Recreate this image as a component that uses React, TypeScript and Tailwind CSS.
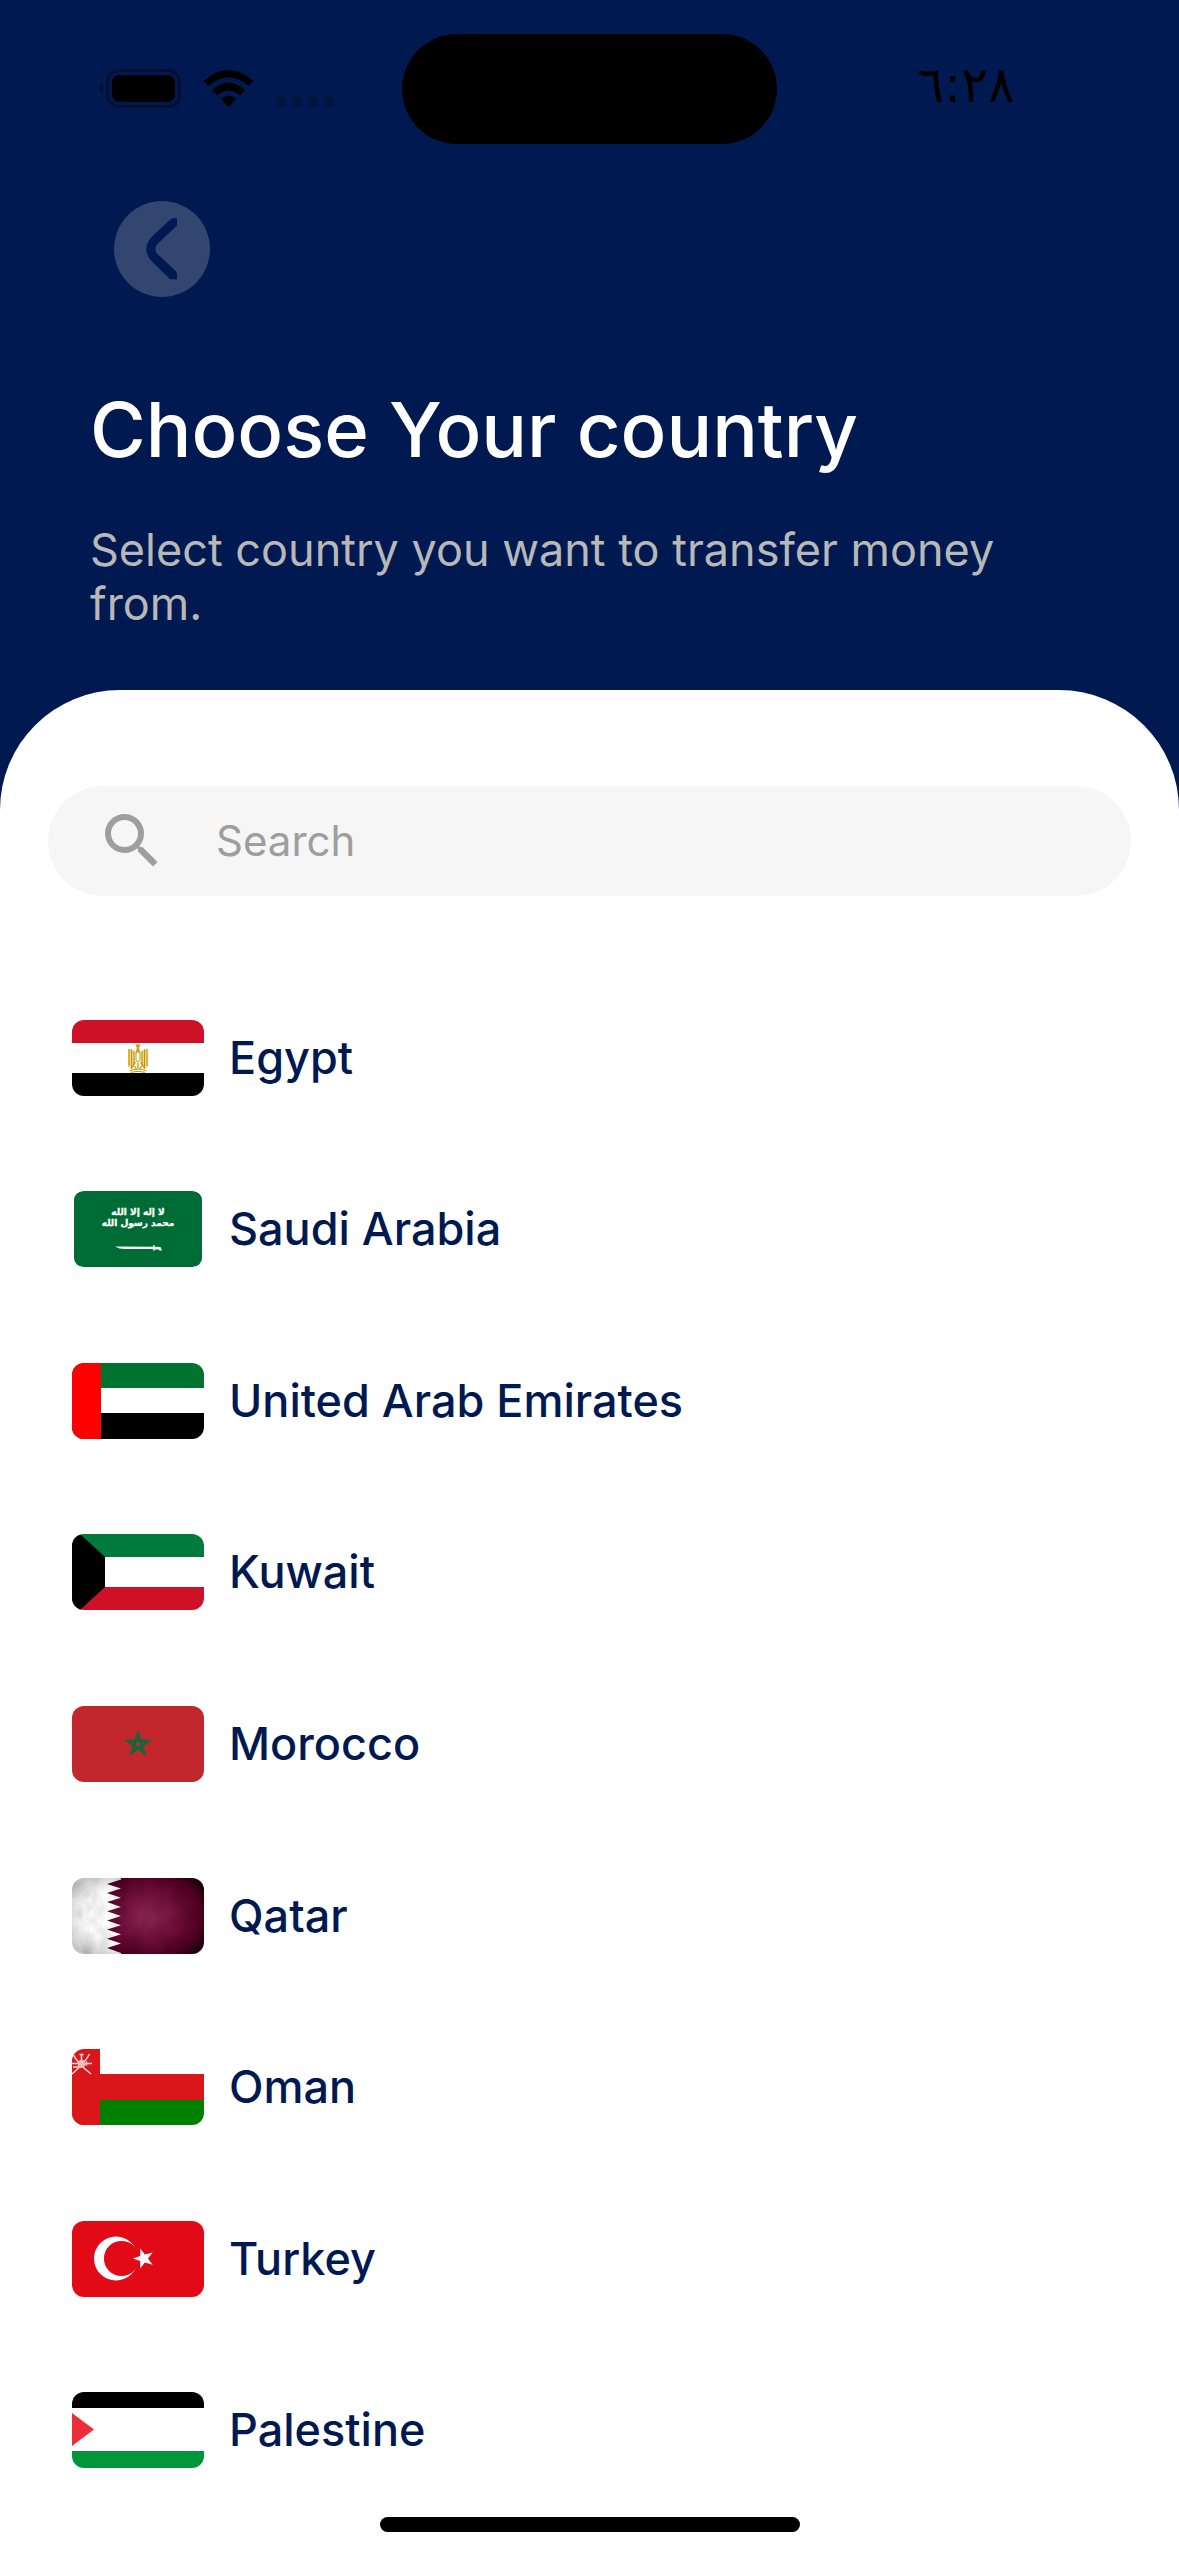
import { useState, type ReactNode } from 'react';
import { MdSearch } from 'react-icons/md';

type Country = {
  name: string;
  flag: ReactNode;
};

const countries: Country[] = [
  { name: 'Egypt', flag: <EgyptFlag /> },
  { name: 'Saudi Arabia', flag: <SaudiFlag /> },
  { name: 'United Arab Emirates', flag: <EmiratesFlag /> },
  { name: 'Kuwait', flag: <KuwaitFlag /> },
  { name: 'Morocco', flag: <MoroccoFlag /> },
  { name: 'Qatar', flag: <QatarFlag /> },
  { name: 'Oman', flag: <OmanFlag /> },
  { name: 'Turkey', flag: <TurkeyFlag /> },
  { name: 'Palestine', flag: <PalestineFlag /> },
];

function Flag({ children }: { children: ReactNode }) {
  return (
    <svg
      viewBox="0 0 132 76"
      aria-hidden="true"
      className="h-[76px] w-[132px] shrink-0 rounded-xl"
    >
      {children}
    </svg>
  );
}

function EgyptFlag() {
  return (
    <Flag>
      <rect width="132" height="76" fill="#fff" />
      <rect width="132" height="23" fill="#ce1126" />
      <rect y="53" width="132" height="23" fill="#000" />
      {/* eagle */}
      <path d="M56 29q5-.5 7 3v12l-3 5-4-3zM76 29q-5-.5-7 3v12l3 5 4-3z" fill="#ecd78f" />
      <g fill="none" stroke="#c09300">
        <path d="M57 29v17M59.500 29.500v18M62 31v14M75 29v17M72.500 29.500v18M70 31v14" strokeWidth="1" />
        <path d="M64 32v8q2 4 4 0v-8z" strokeWidth="1" fill="#fff" />
        <path d="M63.500 42l-4.500 7M68.500 42l4.500 7M66 43v5M62.500 46l2 3M69.500 46l-2 3" strokeWidth="1.300" />
        <path d="M57.500 51q8.500-4 17 0M59 52.300q7-2 14 0" strokeWidth="1" />
      </g>
      <path d="M63.500 25.500q2-2.500 4.500-.5l.5 1.500-1.500.5 1 5h-4l.8-4.500z" fill="#c9a227" />
    </Flag>
  );
}

function SaudiFlag() {
  return (
    <Flag>
      <rect x="2" width="128" height="76" rx="9" fill="#006c35" />
      <g
        fill="#fff"
        stroke="#fff"
        strokeWidth=".3"
        textAnchor="middle"
        className="font-['DejaVu_Sans',sans-serif] text-[9px] font-bold"
      >
        <text x="66" y="24">لا إله إلا الله</text>
        <text x="66" y="35">محمد رسول الله</text>
      </g>
      <path d="M43 55.500l38 .2v-1.500h1.500v1.500l6 .3 1.500 3.500h-2.500l-.5-1h-4.500v1h-1.500v-1.500H53q-6 0-10-2.500z" fill="#fff" />
    </Flag>
  );
}

function EmiratesFlag() {
  return (
    <Flag>
      <rect width="132" height="76" fill="#fff" />
      <rect width="132" height="25" fill="#00732f" />
      <rect y="50" width="132" height="26" fill="#000" />
      <rect width="29" height="76" fill="#f00" />
    </Flag>
  );
}

function KuwaitFlag() {
  return (
    <Flag>
      <rect width="132" height="76" fill="#fff" />
      <rect width="132" height="23" fill="#007a3d" />
      <rect y="53" width="132" height="23" fill="#ce1126" />
      <path d="M0 0h8l25 23v30L8 76H0z" fill="#000" />
    </Flag>
  );
}

function MoroccoFlag() {
  return (
    <Flag>
      <rect width="132" height="76" fill="#c1272d" />
      <path
        d="M66 28l6.400 18.800-16.600-11.800h20.400L59.600 46.800z"
        fill="none"
        stroke="#0b6a38"
        strokeWidth="2.500"
      />
    </Flag>
  );
}

function QatarFlag() {
  return (
    <Flag>
      <defs>
        <radialGradient id="qatar-cloth" cx=".42" cy=".5" r=".68">
          <stop offset="0" stopColor="#8a2654" />
          <stop offset=".45" stopColor="#6f0e3a" />
          <stop offset=".8" stopColor="#500022" />
          <stop offset="1" stopColor="#1d000b" />
        </radialGradient>
        <radialGradient id="qatar-white" cx=".5" cy=".5" r=".62">
          <stop offset="0" stopColor="#fff" />
          <stop offset=".65" stopColor="#fafafa" />
          <stop offset="1" stopColor="#c8c8c8" />
        </radialGradient>
        <filter id="qatar-grain" x="0" y="0" width="1" height="1">
          <feTurbulence type="fractalNoise" baseFrequency=".07 .05" numOctaves="4" seed="4" />
          <feColorMatrix values="0 0 0 0 0  0 0 0 0 0  0 0 0 0 0  1.200 0 0 0 -.45" />
        </filter>
      </defs>
      <rect width="132" height="76" fill="url(#qatar-white)" />
      <path
        d="M49 0v1.500L35 6l14 4.600L35 15l14 4.800L35 24l14 5L35 33.300l14 4.800L35 42.500l14 4.700-14 4.400 14 4.600-14 4.500 14 4.700-14 4.500L49 75v1h83V0z"
        fill="url(#qatar-cloth)"
      />
      <rect width="132" height="76" filter="url(#qatar-grain)" opacity=".22" />
    </Flag>
  );
}

function OmanFlag() {
  return (
    <Flag>
      <rect width="132" height="76" fill="#fff" />
      <rect y="25" width="132" height="26" fill="#db161b" />
      <rect y="51" width="132" height="25" fill="#008000" />
      <rect width="28" height="76" fill="#db161b" />
      {/* crossed swords and khanjar */}
      <g fill="none" stroke="#f9dcdc" strokeWidth="1.500">
        <path d="M1 5q4 9 18 20M17.500 5Q13 14 0 25M9.500 5v9M0 14.500h7M13 14.500h7M1 18h6" />
        <path d="M7.500 5.500h4M14.500 12.500v4" />
      </g>
      <path d="M7.500 11h4l2 5-2 3h-4l-2-3z" fill="#f4b9bb" />
    </Flag>
  );
}

function TurkeyFlag() {
  return (
    <Flag>
      <rect width="132" height="76" fill="#e30a17" />
      <circle cx="44" cy="37.500" r="22" fill="#fff" />
      <circle cx="49.500" cy="37.500" r="17.600" fill="#e30a17" />
      <path d="M61 37.500l7.200-2.400.1-7.600 4.500 6.100 7.900-2.200-4.800 6.100 4.800 6.200-7.900-2.300-4.500 6.200-.1-7.700z" fill="#fff" />
    </Flag>
  );
}

function PalestineFlag() {
  return (
    <Flag>
      <rect width="132" height="76" fill="#fff" />
      <rect width="132" height="16" fill="#000" />
      <rect y="59" width="132" height="17" fill="#009639" />
      <path d="M0 21l22 16.500L0 54z" fill="#ed2e38" />
    </Flag>
  );
}

function StatusBar() {
  return (
    <div className="grid h-[110px] grid-cols-[1fr_375px_1fr] items-center">
      <svg viewBox="96 66 240 44" aria-hidden="true" className="ml-24 h-11 w-60">
        <path d="M103 81.500v12q-4-2-4-6t4-6z" fill="#000f30" />
        <rect x="107.500" y="69.500" width="72" height="36" rx="11" fill="none" stroke="#000f30" strokeWidth="3" />
        <rect x="112" y="74" width="63" height="27" rx="7.500" />
        <path d="M203.500 80Q228.500 58 253.500 80l-5 4.700q-20-16.500-40 0zM212 89q16.500-15 33 0l-5.200 5.200q-11.300-9.500-22.600 0zM220.800 98q7.700-7 15.400 0l-7.700 8z" />
        <g fill="#00133d">
          <rect x="276" y="96" width="10" height="10" rx="3" />
          <rect x="292" y="96" width="10" height="10" rx="3" />
          <rect x="308" y="96" width="10" height="10" rx="3" />
          <rect x="324" y="96" width="10" height="10" rx="3" />
        </g>
      </svg>
      <div className="h-full rounded-full bg-black" />
      <span className="pr-6 pb-2 text-center font-['DejaVu_Sans',sans-serif] text-[50px] text-black">
        ٦:٢٨
      </span>
    </div>
  );
}

export default function App() {
  const [query, setQuery] = useState('');

  const visible = countries.filter((country) =>
    country.name.toLowerCase().includes(query.trim().toLowerCase())
  );

  return (
    <div className="flex min-h-screen flex-col bg-[#001950] font-['Inter',sans-serif]">
      <header className="pt-[34px] pb-[59px]">
        <StatusBar />
        <div className="px-[90px]">
          <button
            type="button"
            aria-label="Back"
            className="mt-[57px] ml-6 block size-24 rounded-full bg-[#334670]"
          >
            <svg viewBox="0 0 96 96" aria-hidden="true" className="size-24">
              <path
                d="M63 17.500q-4-1.500-7 1.200L38 35.500q-11.500 12.500 0 25L56 78.300h7v-6.500q-1-2-3-3.600L44 53.500q-5.500-5.500 0-11L62 25.500l1-1z"
                fill="#001950"
              />
            </svg>
          </button>
          <h1 className="mt-[88px] text-[76px] leading-[88px] font-medium text-white">
            Choose Your country
          </h1>
          <p className="mt-[50px] text-[45px] leading-[54px] text-[#b8b8b8]">
            Select country you want to transfer money from.
          </p>
        </div>
      </header>

      <main className="flex flex-1 flex-col rounded-t-[120px] bg-white pt-24">
        <label className="mx-12 flex h-[110px] items-center gap-12 rounded-full bg-[#f6f6f6] px-12">
          <MdSearch aria-hidden="true" className="size-[72px] shrink-0 text-[#9e9e9e]" />
          <input
            type="text"
            aria-label="Search"
            placeholder="Search"
            value={query}
            onChange={(e) => setQuery(e.target.value)}
            className="min-w-0 flex-1 bg-transparent text-[42px] leading-[60px] text-[#001950] outline-none placeholder:text-[#9e9e9e]"
          />
        </label>

        <ul className="mt-[76px] mb-px flex flex-1 flex-col">
          {visible.map((country) => (
            <li key={country.name} className="flex flex-1">
              <button
                type="button"
                className="flex flex-1 items-center gap-[25px] px-[72px] text-left text-[45px] leading-[54px] font-medium text-[#001950]"
              >
                {country.flag}
                {country.name}
              </button>
            </li>
          ))}
        </ul>

        <div className="mx-auto mb-6 h-[15px] w-[420px] rounded-full bg-black" />
      </main>
    </div>
  );
}
